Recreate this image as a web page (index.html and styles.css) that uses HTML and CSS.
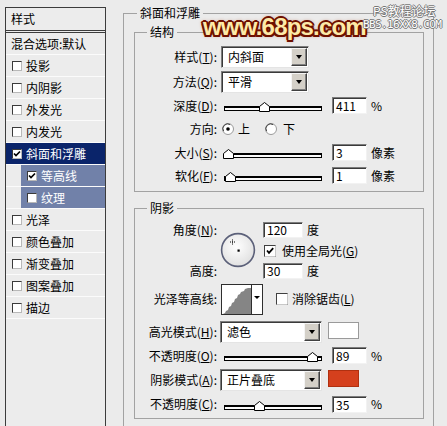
FILE: index.html
```html
<!DOCTYPE html>
<html lang="zh-CN">
<head>
<meta charset="utf-8">
<title>图层样式</title>
<link rel="stylesheet" href="styles.css">
</head>
<body>
<div class="dialog">
  <aside class="style-list">
    <div class="list-head">样式</div>
    <div class="item blend">混合选项:默认</div>
    <div class="item"><span class="cb"></span>投影</div>
    <div class="item"><span class="cb"></span>内阴影</div>
    <div class="item"><span class="cb"></span>外发光</div>
    <div class="item"><span class="cb"></span>内发光</div>
    <div class="item selected"><span class="cb"><svg width="8" height="8" viewBox="0 0 8 8"><path d="M1 3.5 L3 5.5 L7 1.5" fill="none" stroke="#000" stroke-width="1.7"/></svg></span>斜面和浮雕</div>
    <div class="item sub"><span class="cb"><svg width="8" height="8" viewBox="0 0 8 8"><path d="M1 3.5 L3 5.5 L7 1.5" fill="none" stroke="#000" stroke-width="1.7"/></svg></span>等高线</div>
    <div class="item sub"><span class="cb"></span>纹理</div>
    <div class="item"><span class="cb"></span>光泽</div>
    <div class="item"><span class="cb"></span>颜色叠加</div>
    <div class="item"><span class="cb"></span>渐变叠加</div>
    <div class="item"><span class="cb"></span>图案叠加</div>
    <div class="item"><span class="cb"></span>描边</div>
  </aside>

  <main class="settings">
    <fieldset class="group outer">
      <legend>斜面和浮雕</legend>

      <fieldset class="group inner struct">
        <legend>结构</legend>
        <div class="form struct-form">
          <div class="lbl">样式(<u>T</u>):</div>
          <div class="ctrl"><div class="select sel-struct"><span class="sel-text">内斜面</span><span class="sel-btn"></span></div></div>

          <div class="lbl">方法(<u>Q</u>):</div>
          <div class="ctrl"><div class="select sel-struct"><span class="sel-text">平滑</span><span class="sel-btn"></span></div></div>

          <div class="lbl">深度(<u>D</u>):</div>
          <div class="ctrl">
            <div class="slider"><div class="track"></div><span class="thumb" style="left:35px"><svg width="11" height="10" viewBox="0 0 11 10"><path d="M0.5 9.5V4.5L5.5 0.5L10.5 4.5V9.5Z" fill="#fff" stroke="#000"/></svg></span></div>
            <div class="num">411</div><span class="unit">%</span>
          </div>

          <div class="lbl">方向:</div>
          <div class="ctrl radios">
            <svg class="radio" width="12" height="12" viewBox="0 0 12 12"><circle cx="6" cy="6" r="5.5" fill="#fff" stroke="#9a9a9a"/><path d="M1.6 8.2A4.8 4.8 0 0 1 8.2 1.6" fill="none" stroke="#404040"/><circle cx="6" cy="6" r="1.8" fill="#000"/></svg>
            <span class="rlabel">上</span>
            <svg class="radio r2" width="12" height="12" viewBox="0 0 12 12"><circle cx="6" cy="6" r="5.5" fill="#fff" stroke="#9a9a9a"/><path d="M1.6 8.2A4.8 4.8 0 0 1 8.2 1.6" fill="none" stroke="#404040"/></svg>
            <span class="rlabel">下</span>
          </div>

          <div class="lbl">大小(<u>S</u>):</div>
          <div class="ctrl">
            <div class="slider"><div class="track"></div><span class="thumb" style="left:-1px"><svg width="11" height="10" viewBox="0 0 11 10"><path d="M0.5 9.5V4.5L5.5 0.5L10.5 4.5V9.5Z" fill="#fff" stroke="#000"/></svg></span></div>
            <div class="num">3</div><span class="unit">像素</span>
          </div>

          <div class="lbl">软化(<u>F</u>):</div>
          <div class="ctrl">
            <div class="slider"><div class="track"></div><span class="thumb" style="left:1px"><svg width="11" height="10" viewBox="0 0 11 10"><path d="M0.5 9.5V4.5L5.5 0.5L10.5 4.5V9.5Z" fill="#fff" stroke="#000"/></svg></span></div>
            <div class="num">1</div><span class="unit">像素</span>
          </div>
        </div>
      </fieldset>

      <fieldset class="group inner shadow">
        <legend>阴影</legend>
        <div class="form shadow-form">
          <div class="lbl r1">角度(<u>N</u>):</div>
          <svg class="dial" width="36" height="36" viewBox="0 0 36 36">
            <defs><radialGradient id="dg" cx="45%" cy="40%" r="65%"><stop offset="0" stop-color="#ffffff"/><stop offset="1" stop-color="#dedede"/></radialGradient></defs>
            <circle cx="18" cy="18" r="16.4" fill="url(#dg)" stroke="#5b6079" stroke-width="1.6"/>
            <rect x="17.5" y="17.5" width="2.2" height="2.2" fill="#000"/>
            <path d="M12.5 7.5v5M10 10h5" stroke="#000" stroke-width="1" stroke-dasharray="1 1"/>
          </svg>
          <div class="c3 r1"><div class="num num-angle">120</div><span class="unit">度</span></div>
          <div class="c3 r2">
            <svg class="chk" width="12" height="12" viewBox="0 0 12 12"><rect x="0.5" y="0.5" width="11" height="11" fill="#fff" stroke="#404040"/><path d="M11.5 0.5V11.5H0.5" fill="none" stroke="#c8c8c8"/><path d="M3 5.5L5 7.8L9.2 3.2" fill="none" stroke="#000" stroke-width="1.8"/></svg>
            <span class="chk-label">使用全局光(<u>G</u>)</span>
          </div>
          <div class="lbl r3">高度:</div>
          <div class="c3 r3"><div class="num num-angle">30</div><span class="unit">度</span></div>

          <div class="lbl r4">光泽等高线:</div>
          <div class="ctrl r4">
            <div class="contour">
              <svg width="28" height="28" viewBox="0 0 28 28"><path d="M0 28L2 27L3 25L5 24L6 21L8 20L9 17L11 16L12 13L14 12L15 9L17 8L18 6L21 5L22 3L25 2L28 2V28Z" fill="#858585"/></svg>
              <span class="contour-btn"></span>
            </div>
            <svg class="chk chk-aa" width="12" height="12" viewBox="0 0 12 12"><rect x="0.5" y="0.5" width="11" height="11" fill="#fff" stroke="#404040"/><path d="M11.5 0.5V11.5H0.5" fill="none" stroke="#c8c8c8"/></svg>
            <span class="chk-label">消除锯齿(<u>L</u>)</span>
          </div>

          <div class="lbl r5">高光模式(<u>H</u>):</div>
          <div class="ctrl r5">
            <div class="select sel-shadow"><span class="sel-text">滤色</span><span class="sel-btn"></span></div>
            <span class="swatch swatch-white"></span>
          </div>

          <div class="lbl r6">不透明度(<u>O</u>):</div>
          <div class="ctrl r6">
            <div class="slider"><div class="track"></div><span class="thumb" style="left:83px"><svg width="11" height="10" viewBox="0 0 11 10"><path d="M0.5 9.5V4.5L5.5 0.5L10.5 4.5V9.5Z" fill="#fff" stroke="#000"/></svg></span></div>
            <div class="num">89</div><span class="unit">%</span>
          </div>

          <div class="lbl r7">阴影模式(<u>A</u>):</div>
          <div class="ctrl r7">
            <div class="select sel-shadow"><span class="sel-text">正片叠底</span><span class="sel-btn"></span></div>
            <span class="swatch swatch-red"></span>
          </div>

          <div class="lbl r8">不透明度(<u>C</u>):</div>
          <div class="ctrl r8">
            <div class="slider"><div class="track"></div><span class="thumb" style="left:30px"><svg width="11" height="10" viewBox="0 0 11 10"><path d="M0.5 9.5V4.5L5.5 0.5L10.5 4.5V9.5Z" fill="#fff" stroke="#000"/></svg></span></div>
            <div class="num">35</div><span class="unit">%</span>
          </div>
        </div>
      </fieldset>
    </fieldset>
  </main>

  <div class="watermark" aria-hidden="true">
    <span class="wm-site">www.68ps.com</span>
    <span class="wm-forum">PS教程论坛</span>
    <span class="wm-bbs">BBS.16XX8.COM</span>
  </div>
</div>
</body>
</html>
```

FILE: styles.css
```css
* { box-sizing: border-box; }

html, body {
  margin: 0;
  padding: 0;
}

body {
  width: 447px;
  height: 426px;
  overflow: hidden;
  background: #ebebeb;
  font-family: "Noto Sans CJK SC", "Noto Sans", sans-serif;
  font-size: 12px;
  line-height: 14px;
  color: #000;
}

.dialog {
  position: relative;
  display: flex;
  align-items: flex-start;
  height: 426px;
  overflow: hidden;
}

/* ---------- left style list ---------- */
.style-list {
  margin: 7px 0 0 5px;
  width: 101px;
  height: 440px;
  flex: none;
  border: 1px solid #3c3c3c;
  background: #ececec;
}

.list-head {
  height: 25px;
  padding: 4px 0 0 5px;
  border-bottom: 3px double #3c3c3c;
}

.item {
  height: 22px;
  display: flex;
  align-items: center;
  padding-left: 6px;
  border-bottom: 1px solid #fbfbfb;
  white-space: nowrap;
}

.item.blend { padding-left: 5px; }

.cb {
  width: 10px;
  height: 10px;
  flex: none;
  margin-right: 4px;
  background: #fff;
  border: 1px solid;
  border-color: #3a3a3a #b8b8b8 #b8b8b8 #3a3a3a;
  display: flex;
  align-items: center;
  justify-content: center;
}

.item.selected {
  background: #0a246a;
  color: #fff;
}

.item.sub {
  padding-left: 21px;
  color: #fff;
  background: linear-gradient(to right, transparent 15px, #7181a9 15px);
}

/* ---------- right settings ---------- */
.settings {
  margin-left: 17px;
  flex: none;
}

.group {
  min-width: 0;
  border: 1px solid #a2a2a2;
}

.group > legend {
  padding: 0 3px;
  height: 14px;
  line-height: 14px;
}

.outer {
  margin: 6px 0 0;
  width: 311px;
  height: 440px;
  padding: 0 9px 0 10px;
}

.outer > legend { margin-left: 3px; }

.inner > legend { margin-left: 12px; }

.struct {
  margin: 5px 0 0;
  padding: 5px 0 4px;
}

.shadow {
  margin: 9px 0 0;
  padding: 5px 0 5px;
}

.form {
  display: grid;
  grid-template-columns: 86px 42px 1fr;
  align-items: center;
}

.struct-form { grid-template-rows: 25px 25px 23px 24px 23px 23px; }
.shadow-form { grid-template-rows: 20px 21px 19px 38px 28px 19px 30px 18px; }

.lbl {
  grid-column: 1;
  text-align: right;
  padding-right: 4px;
  white-space: nowrap;
}

.ctrl {
  grid-column: 2 / -1;
  display: flex;
  align-items: center;
  white-space: nowrap;
}

.c3 {
  grid-column: 3;
  display: flex;
  align-items: center;
  white-space: nowrap;
}

.r1 { grid-row: 1; }
.r2 { grid-row: 2; }
.r3 { grid-row: 3; }
.r4 { grid-row: 4; }
.r5 { grid-row: 5; }
.r6 { grid-row: 6; }
.r7 { grid-row: 7; }
.r8 { grid-row: 8; }

u { text-decoration: underline; text-underline-offset: 1px; }

/* dropdown */
.select {
  height: 22px;
  display: flex;
  align-items: center;
  background: #fff;
  border: 1px solid;
  border-color: #7c7c7c #e4e4e4 #e4e4e4 #7c7c7c;
  box-shadow: inset 1px 1px 0 #3a3a3a;
  padding-left: 6px;
}

.sel-struct { width: 88px; }
.sel-shadow { width: 102px; margin-left: -1px; }

.sel-text { flex: 1; }

.sel-btn {
  width: 16px;
  height: 18px;
  margin-right: 1px;
  flex: none;
  background: #d4d0c8;
  border: 1px solid;
  border-color: #f4f4f4 #404040 #404040 #f4f4f4;
  box-shadow: inset -1px -1px 0 #808080;
  display: flex;
  align-items: center;
  justify-content: center;
}

.sel-btn::after {
  content: "";
  border-top: 4px solid #000;
  border-left: 3.5px solid transparent;
  border-right: 3.5px solid transparent;
}

/* slider */
.slider {
  position: relative;
  width: 98px;
  height: 10px;
  margin: 3px 0 0 3px;
  flex: none;
  display: flex;
  align-items: flex-end;
}

.track {
  width: 100%;
  height: 5px;
  margin-bottom: 1px;
  background: #fafafa;
  border: 1px solid #000;
  border-top-width: 2px;
}

.thumb {
  position: absolute;
  bottom: 0;
  width: 11px;
  height: 10px;
  display: block;
}

.thumb svg { display: block; }

/* number input */
.num {
  width: 35px;
  height: 17px;
  margin-left: 10px;
  flex: none;
  background: #fff;
  border: 1px solid;
  border-color: #7c7c7c #f2f2f2 #f2f2f2 #7c7c7c;
  box-shadow: inset 1px 1px 0 #3a3a3a;
  padding-left: 3px;
  line-height: 15px;
}

.num-angle {
  width: 40px;
  height: 16px;
  margin-left: 0;
  line-height: 14px;
}

.unit { margin-left: 4px; }

/* radios */
.radio { display: block; margin-left: 1px; flex: none; }
.radio.r2 { margin-left: 15px; }
.rlabel { margin-left: 4px; }
.radios .rlabel:last-child { margin-left: 6px; }

/* dial */
.dial {
  grid-column: 2;
  grid-row: 1 / span 3;
  margin-left: -1px;
  display: block;
}

/* checkboxes */
.chk { display: block; flex: none; margin-left: 1px; }
.chk-label { margin-left: 6px; }
.chk-aa { margin-left: 13px; }
.chk-aa + .chk-label { margin-left: 4px; }

/* contour */
.contour {
  width: 42px;
  height: 31px;
  flex: none;
  display: flex;
  background: #fff;
  border: 1px solid #2e2e2e;
  padding: 1px 0 0 1px;
}

.contour svg { display: block; flex: none; }

.contour-btn {
  flex: 1;
  margin-top: -1px;
  border-left: 1px solid #2e2e2e;
  display: flex;
  justify-content: center;
  padding-top: 11px;
}

.contour-btn::after {
  content: "";
  height: 0;
  border-top: 3px solid #000;
  border-left: 3px solid transparent;
  border-right: 3px solid transparent;
}

/* colour swatches */
.swatch {
  width: 31px;
  height: 17px;
  margin: -4px 0 0 6px;
  flex: none;
  border: 1px solid #9a9a9a;
}

.swatch-white { background: #fff; }
.swatch-red { background: #d5401d; border-color: #b03010; }

/* ---------- watermark overlay ---------- */
.watermark {
  position: absolute;
  inset: 0;
  pointer-events: none;
}

.wm-site {
  position: absolute;
  left: 203px;
  top: 15px;
  font: bold 24px/24px "Liberation Sans", sans-serif;
  letter-spacing: -0.8px;
  color: #fdeaa8;
  text-shadow:
    2px 0 0 #6e1000, -2px 0 0 #6e1000, 0 2px 0 #6e1000, 0 -2px 0 #6e1000,
    1.5px 1.5px 0 #6e1000, -1.5px 1.5px 0 #6e1000, 1.5px -1.5px 0 #6e1000, -1.5px -1.5px 0 #6e1000,
    0 0 4px #a8401a;
}

.wm-forum {
  position: absolute;
  left: 373px;
  top: 4px;
  font: 12px/13px "Noto Sans CJK SC", sans-serif;
  color: #ffffff;
  text-shadow:
    1px 0 0 #777, -1px 0 0 #777, 0 1px 0 #777, 0 -1px 0 #777;
}

.wm-bbs {
  position: absolute;
  left: 363px;
  top: 19px;
  font: 11px/11px "DejaVu Sans Mono", monospace;
  letter-spacing: -0.6px;
  color: #ffffff;
  text-shadow:
    1px 0 0 #777, -1px 0 0 #777, 0 1px 0 #777, 0 -1px 0 #777;
}
```
